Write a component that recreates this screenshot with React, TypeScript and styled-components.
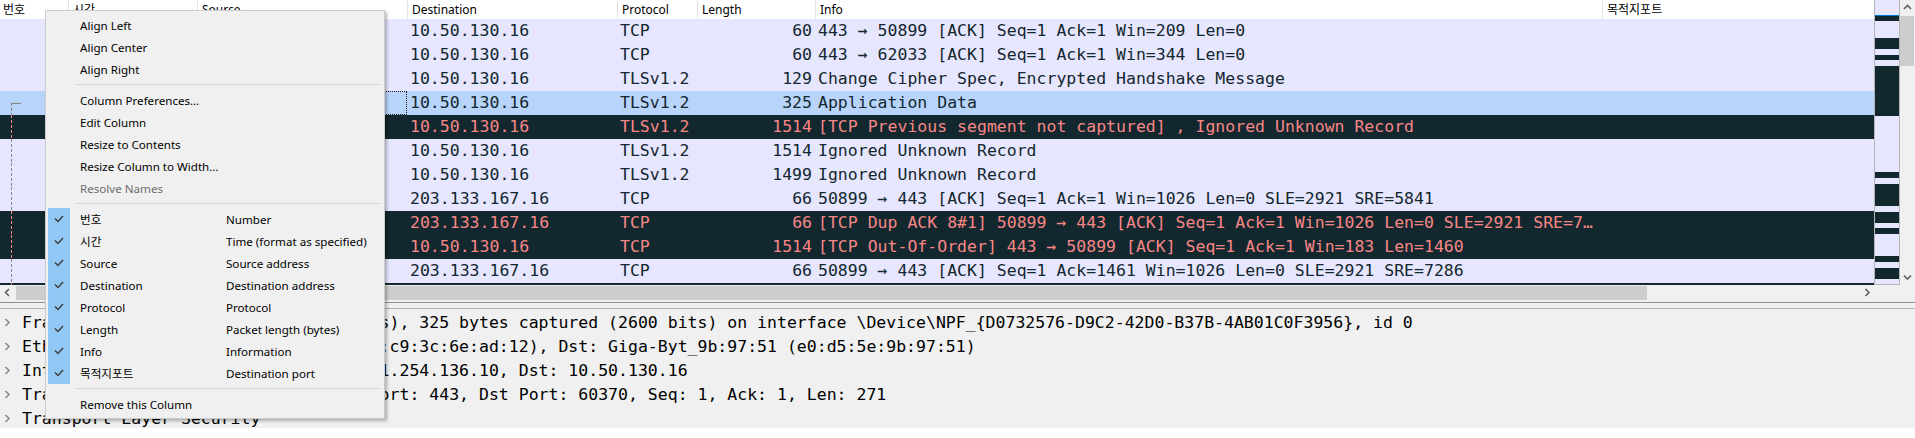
import React from "react";
import styled, { createGlobalStyle } from "styled-components";

const MONO = `"DejaVu Sans Mono", "Liberation Mono", monospace`;
const UI = `"Noto Sans", "Noto Sans CJK KR", sans-serif`;

const LAVENDER = "#e7e6ff";
const SELECTED = "#b9d4fb";
const DARK = "#12272e";
const BAD_FG = "#f78787";

// 번호 | 시간 | Source | Destination | Protocol | Length | Info | 목적지포트
const COLS = "68px 129px 210px 210px 80px 118px 787px 1fr";

type RowKind = "normal" | "selected" | "bad";

type Packet = {
  no: number;
  time: string;
  src: string;
  dst: string;
  proto: string;
  len: number;
  info: string;
  kind: RowKind;
  rel?: "start" | "line";
};

const packets: Packet[] = [
  { no: 1, time: "0.000000", src: "211.254.136.10", dst: "10.50.130.16", proto: "TCP", len: 60, info: "443 → 50899 [ACK] Seq=1 Ack=1 Win=209 Len=0", kind: "normal" },
  { no: 2, time: "0.000412", src: "211.254.136.10", dst: "10.50.130.16", proto: "TCP", len: 60, info: "443 → 62033 [ACK] Seq=1 Ack=1 Win=344 Len=0", kind: "normal" },
  { no: 3, time: "0.012873", src: "211.254.136.10", dst: "10.50.130.16", proto: "TLSv1.2", len: 129, info: "Change Cipher Spec, Encrypted Handshake Message", kind: "normal" },
  { no: 4, time: "0.013102", src: "211.254.136.10", dst: "10.50.130.16", proto: "TLSv1.2", len: 325, info: "Application Data", kind: "selected", rel: "start" },
  { no: 5, time: "0.045310", src: "211.254.136.10", dst: "10.50.130.16", proto: "TLSv1.2", len: 1514, info: "[TCP Previous segment not captured] , Ignored Unknown Record", kind: "bad", rel: "line" },
  { no: 6, time: "0.045322", src: "211.254.136.10", dst: "10.50.130.16", proto: "TLSv1.2", len: 1514, info: "Ignored Unknown Record", kind: "normal", rel: "line" },
  { no: 7, time: "0.045329", src: "211.254.136.10", dst: "10.50.130.16", proto: "TLSv1.2", len: 1499, info: "Ignored Unknown Record", kind: "normal", rel: "line" },
  { no: 8, time: "0.045401", src: "10.50.130.16", dst: "203.133.167.16", proto: "TCP", len: 66, info: "50899 → 443 [ACK] Seq=1 Ack=1 Win=1026 Len=0 SLE=2921 SRE=5841", kind: "normal", rel: "line" },
  { no: 9, time: "0.045433", src: "10.50.130.16", dst: "203.133.167.16", proto: "TCP", len: 66, info: "[TCP Dup ACK 8#1] 50899 → 443 [ACK] Seq=1 Ack=1 Win=1026 Len=0 SLE=2921 SRE=7286", kind: "bad", rel: "line" },
  { no: 10, time: "0.046012", src: "203.133.167.16", dst: "10.50.130.16", proto: "TCP", len: 1514, info: "[TCP Out-Of-Order] 443 → 50899 [ACK] Seq=1 Ack=1 Win=183 Len=1460", kind: "bad", rel: "line" },
  { no: 11, time: "0.046055", src: "10.50.130.16", dst: "203.133.167.16", proto: "TCP", len: 66, info: "50899 → 443 [ACK] Seq=1 Ack=1461 Win=1026 Len=0 SLE=2921 SRE=7286", kind: "normal", rel: "line" },
  { no: 12, time: "0.046120", src: "211.254.136.10", dst: "10.50.130.16", proto: "TLSv1.2", len: 1514, info: "[TCP Previous segment not captured] , Ignored Unknown Record", kind: "bad", rel: "line" },
];

const headers = ["번호", "시간", "Source", "Destination", "Protocol", "Length", "Info", "목적지포트"];

const miniBands: [number, number][] = [
  [16, 21], [38, 49], [55, 60], [66, 116], [172, 178], [184, 206],
  [212, 223], [228, 234], [256, 262], [268, 279],
];

const details = [
  "Frame 4: 325 bytes on wire (2600 bits), 325 bytes captured (2600 bits) on interface \\Device\\NPF_{D0732576-D9C2-42D0-B37B-4AB01C0F3956}, id 0",
  "Ethernet II, Src: Cisco_6e:ad:12 (00:c9:3c:6e:ad:12), Dst: Giga-Byt_9b:97:51 (e0:d5:5e:9b:97:51)",
  "Internet Protocol Version 4, Src: 211.254.136.10, Dst: 10.50.130.16",
  "Transmission Control Protocol, Src Port: 443, Dst Port: 60370, Seq: 1, Ack: 1, Len: 271",
  "Transport Layer Security",
];

type MenuEntry =
  | { type: "item"; label: string; disabled?: boolean }
  | { type: "check"; label: string; desc: string }
  | { type: "sep" };

const menu: MenuEntry[] = [
  { type: "item", label: "Align Left" },
  { type: "item", label: "Align Center" },
  { type: "item", label: "Align Right" },
  { type: "sep" },
  { type: "item", label: "Column Preferences…" },
  { type: "item", label: "Edit Column" },
  { type: "item", label: "Resize to Contents" },
  { type: "item", label: "Resize Column to Width…" },
  { type: "item", label: "Resolve Names", disabled: true },
  { type: "sep" },
  { type: "check", label: "번호", desc: "Number" },
  { type: "check", label: "시간", desc: "Time (format as specified)" },
  { type: "check", label: "Source", desc: "Source address" },
  { type: "check", label: "Destination", desc: "Destination address" },
  { type: "check", label: "Protocol", desc: "Protocol" },
  { type: "check", label: "Length", desc: "Packet length (bytes)" },
  { type: "check", label: "Info", desc: "Information" },
  { type: "check", label: "목적지포트", desc: "Destination port" },
  { type: "sep" },
  { type: "item", label: "Remove this Column" },
];

const GlobalStyle = createGlobalStyle`
  html, body {
    margin: 0;
    padding: 0;
    background: #ffffff;
    overflow: hidden;
  }
  #root {
    width: 1915px;
    height: 438px;
  }
`;

const Window = styled.div`
  position: relative;
  width: 1915px;
  height: 438px;
  background: #ffffff;
  display: flex;
  flex-direction: column;
`;

const PacketPane = styled.div`
  display: flex;
  flex-direction: column;
  height: 300px;
`;

const ListArea = styled.div`
  display: flex;
  height: 285px;
`;

const PacketList = styled.div`
  width: 1874px;
  height: 285px;
  overflow: hidden;
  background: #ffffff;
`;

const HeaderRow = styled.div`
  display: grid;
  grid-template-columns: ${COLS};
  height: 19px;
  background: #ffffff;
`;

const HeadCell = styled.div`
  font-family: ${UI};
  font-size: 12px;
  line-height: 19px;
  color: #000;
  padding-left: 4px;
  white-space: nowrap;
  overflow: hidden;
  &:first-child {
    padding-left: 3px;
  }
  &:not(:first-child) {
    border-left: 1px solid #e5e5e5;
  }
`;

const Row = styled.div<{ $kind: RowKind }>`
  display: grid;
  grid-template-columns: ${COLS};
  height: 24px;
  line-height: 24px;
  font-family: ${MONO};
  font-size: 16.5px;
  background: ${({ $kind }) =>
    $kind === "bad" ? DARK : $kind === "selected" ? SELECTED : LAVENDER};
  color: ${({ $kind }) => ($kind === "bad" ? BAD_FG : DARK)};
`;

const Cell = styled.div<{ $right?: boolean; $focus?: boolean }>`
  padding: 0 3px;
  white-space: pre;
  overflow: hidden;
  text-overflow: ellipsis;
  text-align: ${({ $right }) => ($right ? "right" : "left")};
  outline: ${({ $focus }) => ($focus ? "1px dotted #1a1a1a" : "none")};
  outline-offset: -1px;
`;

const NoCell = styled.div`
  display: flex;
  align-items: center;
  padding-right: 4px;
  overflow: hidden;
  span {
    margin-left: auto;
  }
`;

const RelSvg = styled.svg`
  flex: none;
  display: block;
`;

const Minimap = styled.div`
  width: 26px;
  height: 285px;
  box-sizing: border-box;
  border-left: 1px solid #b4b4b4;
  border-right: 1px solid #b4b4b4;
  border-bottom: 1px solid #b4b4b4;
  background: ${LAVENDER};
  svg {
    display: block;
  }
`;

const VScroll = styled.div`
  width: 15px;
  height: 285px;
  background: #f0f0f0;
  display: flex;
  flex-direction: column;
`;

const ScrollBtn = styled.div`
  width: 15px;
  height: 15px;
  flex: none;
  display: flex;
  align-items: center;
  justify-content: center;
`;

const VThumb = styled.div`
  margin: 1px 1px 0 0;
  height: 50px;
  background: #cdcdcd;
`;

const VTrack = styled.div`
  flex: 1;
`;

const HScrollRow = styled.div`
  display: flex;
  height: 15px;
`;

const HScroll = styled.div`
  width: 1875px;
  display: flex;
  background: #f0f0f0;
`;

const HThumb = styled.div`
  margin: 1px 0 0 1px;
  width: 1631px;
  background: #cdcdcd;
`;

const HTrack = styled.div`
  flex: 1;
  display: flex;
`;

const Corner = styled.div`
  flex: 1;
  background: #f0f0f0;
`;

const Splitter = styled.div`
  height: 10px;
  background: linear-gradient(
    to bottom,
    #f0f0f0 0 2px,
    #8f8f8f 2px 3px,
    #f0f0f0 3px 8px,
    #b0b0b0 8px 9px,
    #f0f0f0 9px
  );
`;

const DetailPane = styled.div`
  height: 118px;
  overflow: hidden;
  background: #f0f0f0;
`;

const DetailLine = styled.div`
  display: flex;
  align-items: center;
  height: 24px;
  font-family: ${MONO};
  font-size: 16.5px;
  color: #000;
  white-space: pre;
`;

const Expander = styled.div`
  width: 22px;
  flex: none;
  display: flex;
  align-items: center;
  padding-left: 4px;
  box-sizing: border-box;
`;

const Menu = styled.div`
  position: absolute;
  left: 45px;
  top: 10px;
  width: 340px;
  box-sizing: border-box;
  padding: 3px 0;
  background: #f0f0f0;
  border: 1px solid #cccccc;
  box-shadow: 2px 2px 3px rgba(0, 0, 0, 0.28);
  font-family: ${UI};
  font-size: 11.6px;
  z-index: 10;
`;

const MenuItem = styled.div<{ $disabled?: boolean }>`
  display: grid;
  grid-template-columns: 22px 156px 1fr;
  height: 22px;
  align-items: center;
  padding-left: 2px;
  color: ${({ $disabled }) => ($disabled ? "#6d6d6d" : "#000")};
  white-space: nowrap;
`;

const CheckCell = styled.div<{ $checked?: boolean }>`
  height: 22px;
  display: flex;
  align-items: center;
  justify-content: center;
  background: ${({ $checked }) => ($checked ? "#92c8f5" : "transparent")};
`;

const MenuLabel = styled.div`
  padding-left: 10px;
`;

const MenuSep = styled.div`
  height: 1px;
  margin: 4px 3px 4px 30px;
  background: #d5d5d5;
`;

const Chevron = ({ dir, color = "#606060" }: { dir: "up" | "down" | "left" | "right"; color?: string }) => {
  const pts = {
    up: "1,5 4.5,1.5 8,5",
    down: "1,1.5 4.5,5 8,1.5",
    left: "5,1 1.5,4.5 5,8",
    right: "1.5,1 5,4.5 1.5,8",
  }[dir];
  const vertical = dir === "up" || dir === "down";
  return (
    <svg width={vertical ? 9 : 7} height={vertical ? 7 : 9}>
      <polyline points={pts} fill="none" stroke={color} strokeWidth="1.6" />
    </svg>
  );
};

const RelMark = ({ kind, color }: { kind: "start" | "line"; color: string }) => (
  <RelSvg width="24" height="24">
    {kind === "start" ? (
      <>
        <path d="M11 12.5 H21" stroke={color} strokeWidth="1" />
        <path d="M11.5 12 V24" stroke={color} strokeWidth="1" strokeDasharray="3 2" />
      </>
    ) : (
      <path d="M11.5 0 V24" stroke={color} strokeWidth="1" strokeDasharray="3 2" />
    )}
  </RelSvg>
);

const CheckMark = () => (
  <svg width="10" height="8">
    <polyline points="1,3.5 4,6.5 9,1" fill="none" stroke="#404040" strokeWidth="1.5" />
  </svg>
);

const App = () => {
  return (
    <>
      <GlobalStyle />
      <Window>
        <PacketPane>
          <ListArea>
            <PacketList>
              <HeaderRow>
                {headers.map((h) => (
                  <HeadCell key={h}>{h}</HeadCell>
                ))}
              </HeaderRow>
              {packets.map((p) => (
                <Row key={p.no} $kind={p.kind}>
                  <NoCell>
                    {p.rel && (
                      <RelMark kind={p.rel} color={p.kind === "bad" ? BAD_FG : "#858585"} />
                    )}
                    <span>{p.no}</span>
                  </NoCell>
                  <Cell>{p.time}</Cell>
                  <Cell $focus={p.kind === "selected"}>{p.src}</Cell>
                  <Cell>{p.dst}</Cell>
                  <Cell>{p.proto}</Cell>
                  <Cell $right>{p.len}</Cell>
                  <Cell>{p.info}</Cell>
                  <Cell />
                </Row>
              ))}
            </PacketList>
            <Minimap>
              <svg width="24" height="284">
                {miniBands.map(([a, b]) => (
                  <rect key={a} x="0" y={a} width="24" height={b - a} fill={DARK} />
                ))}
                <rect x="0" y="15" width="24" height="1" fill="#0078d7" />
              </svg>
            </Minimap>
            <VScroll>
              <ScrollBtn>
                <Chevron dir="up" />
              </ScrollBtn>
              <VThumb />
              <VTrack />
              <ScrollBtn>
                <Chevron dir="down" />
              </ScrollBtn>
            </VScroll>
          </ListArea>
          <HScrollRow>
            <HScroll>
              <ScrollBtn>
                <Chevron dir="left" />
              </ScrollBtn>
              <HTrack>
                <HThumb />
              </HTrack>
              <ScrollBtn>
                <Chevron dir="right" />
              </ScrollBtn>
            </HScroll>
            <Corner />
          </HScrollRow>
        </PacketPane>
        <Splitter />
        <DetailPane>
          {details.map((d) => (
            <DetailLine key={d}>
              <Expander>
                <Chevron dir="right" color="#8a8a8a" />
              </Expander>
              {d}
            </DetailLine>
          ))}
        </DetailPane>

        <Menu>
          {menu.map((m, i) =>
            m.type === "sep" ? (
              <MenuSep key={i} />
            ) : m.type === "check" ? (
              <MenuItem key={i}>
                <CheckCell $checked>
                  <CheckMark />
                </CheckCell>
                <MenuLabel>{m.label}</MenuLabel>
                <div>{m.desc}</div>
              </MenuItem>
            ) : (
              <MenuItem key={i} $disabled={m.disabled}>
                <CheckCell />
                <MenuLabel>{m.label}</MenuLabel>
                <div />
              </MenuItem>
            )
          )}
        </Menu>
      </Window>
    </>
  );
};

export default App;
